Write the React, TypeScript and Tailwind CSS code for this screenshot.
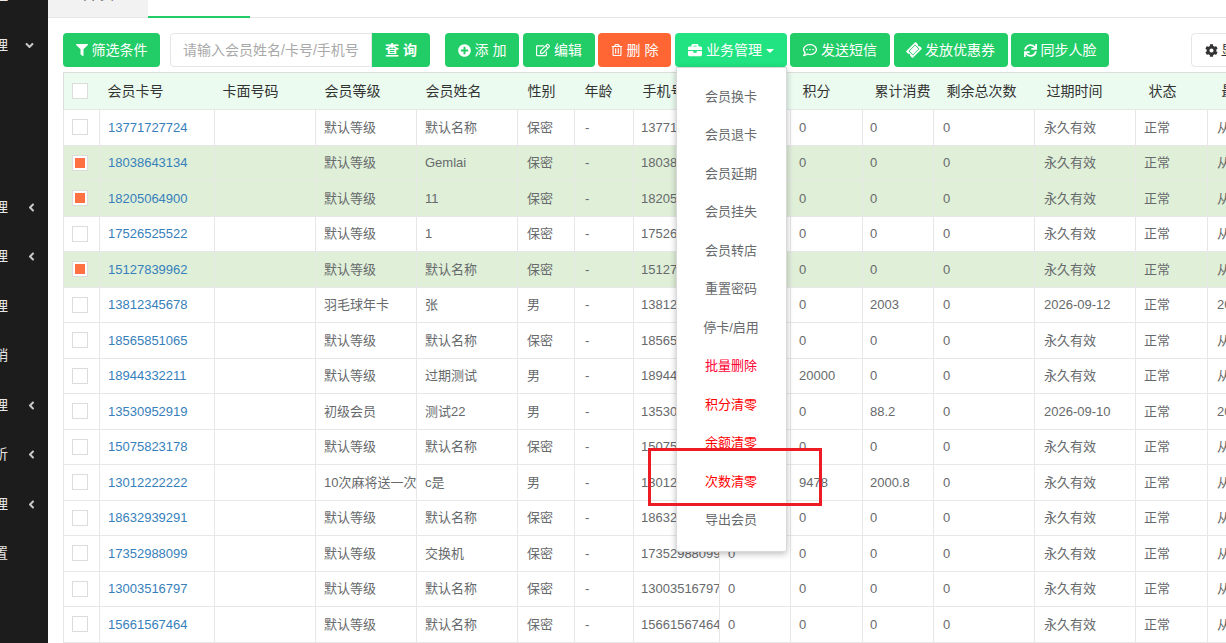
import type { ReactNode } from "react";
import {
  FaAngleDown,
  FaAngleLeft,
  FaBriefcase,
  FaCog,
  FaFilter,
  FaPlusCircle,
  FaRegCommentDots,
  FaRegEdit,
  FaRegTrashAlt,
  FaSync,
  FaTicketAlt,
} from "react-icons/fa";

type Member = {
  card: string;
  level: string;
  name: string;
  sex: string;
  points: string;
  spent: string;
  expire: string;
  last: string;
  checked?: boolean;
};

const FOREVER = "永久有效";
const NEVER = "从未消费";

const members: Member[] = [
  { card: "13771727724", level: "默认等级", name: "默认名称", sex: "保密", points: "0", spent: "0", expire: FOREVER, last: NEVER },
  { card: "18038643134", level: "默认等级", name: "Gemlai", sex: "保密", points: "0", spent: "0", expire: FOREVER, last: NEVER, checked: true },
  { card: "18205064900", level: "默认等级", name: "11", sex: "保密", points: "0", spent: "0", expire: FOREVER, last: NEVER, checked: true },
  { card: "17526525522", level: "默认等级", name: "1", sex: "保密", points: "0", spent: "0", expire: FOREVER, last: NEVER },
  { card: "15127839962", level: "默认等级", name: "默认名称", sex: "保密", points: "0", spent: "0", expire: FOREVER, last: NEVER, checked: true },
  { card: "13812345678", level: "羽毛球年卡", name: "张", sex: "男", points: "0", spent: "2003", expire: "2026-09-12", last: "2025-09-12" },
  { card: "18565851065", level: "默认等级", name: "默认名称", sex: "保密", points: "0", spent: "0", expire: FOREVER, last: NEVER },
  { card: "18944332211", level: "默认等级", name: "过期测试", sex: "男", points: "20000", spent: "0", expire: FOREVER, last: NEVER },
  { card: "13530952919", level: "初级会员", name: "测试22", sex: "男", points: "0", spent: "88.2", expire: "2026-09-10", last: "2025-09-10" },
  { card: "15075823178", level: "默认等级", name: "默认名称", sex: "保密", points: "0", spent: "0", expire: FOREVER, last: NEVER },
  { card: "13012222222", level: "10次麻将送一次", name: "c是", sex: "男", points: "9478", spent: "2000.8", expire: FOREVER, last: NEVER },
  { card: "18632939291", level: "默认等级", name: "默认名称", sex: "保密", points: "0", spent: "0", expire: FOREVER, last: NEVER },
  { card: "17352988099", level: "默认等级", name: "交换机", sex: "保密", points: "0", spent: "0", expire: FOREVER, last: NEVER },
  { card: "13003516797", level: "默认等级", name: "默认名称", sex: "保密", points: "0", spent: "0", expire: FOREVER, last: NEVER },
  { card: "15661567464", level: "默认等级", name: "默认名称", sex: "保密", points: "0", spent: "0", expire: FOREVER, last: NEVER },
];

const columns = [
  { title: "", width: "w-[36px]", pad: "pl-[8px]" },
  { title: "会员卡号", width: "w-[115px]", pad: "pl-[8px]" },
  { title: "卡面号码", width: "w-[101px]", pad: "pl-[8px]" },
  { title: "会员等级", width: "w-[101px]", pad: "pl-[9px]" },
  { title: "会员姓名", width: "w-[101px]", pad: "pl-[9px]" },
  { title: "性别", width: "w-[57px]", pad: "pl-[10px]" },
  { title: "年龄", width: "w-[59px]", pad: "pl-[10px]" },
  { title: "手机号", width: "w-[86px]", pad: "pl-[9px]" },
  { title: "余额", width: "w-[71px]", pad: "pl-[9px]" },
  { title: "积分", width: "w-[72px]", pad: "pl-[12px]" },
  { title: "累计消费", width: "w-[71px]", pad: "pl-[12px]" },
  { title: "剩余总次数", width: "w-[101px]", pad: "pl-[13px]" },
  { title: "过期时间", width: "w-[101px]", pad: "pl-[12px]" },
  { title: "状态", width: "w-[72px]", pad: "pl-[13px]" },
  { title: "最后消费", width: "w-[120px]", pad: "pl-[14px]" },
];

const menuItems = [
  { label: "会员换卡", color: "text-[#676a6c]" },
  { label: "会员退卡", color: "text-[#676a6c]" },
  { label: "会员延期", color: "text-[#676a6c]" },
  { label: "会员挂失", color: "text-[#676a6c]" },
  { label: "会员转店", color: "text-[#676a6c]" },
  { label: "重置密码", color: "text-[#676a6c]" },
  { label: "停卡/启用", color: "text-[#676a6c]" },
  { label: "批量删除", color: "text-[#ff0033]" },
  { label: "积分清零", color: "text-[#ff0000]" },
  { label: "余额清零", color: "text-[#ff0000]" },
  { label: "次数清零", color: "text-[#ff0000]" },
  { label: "导出会员", color: "text-[#676a6c]" },
];

function SideItem({ text, arrow }: { text: string; arrow?: "left" | "down" }) {
  return (
    <div className="flex h-[49.5px] items-center text-[14px] text-[#e6e6e6]">
      <div className="flex w-[8px] shrink-0 justify-end overflow-hidden">
        <span className="shrink-0">{text}</span>
      </div>
      {arrow === "left" && <FaAngleLeft className="ml-[17px] text-[13px] text-[#c9c9c9]" />}
      {arrow === "down" && <FaAngleDown className="ml-[15px] text-[13px] text-[#c9c9c9]" />}
    </div>
  );
}

function Sidebar() {
  return (
    <aside className="h-full w-[48px] shrink-0 overflow-hidden bg-[#1c1c1c]">
      <div className="-mt-[29px]">
        <SideItem text="理" arrow="left" />
        <SideItem text="理" arrow="down" />
        <div className="h-[112.5px]" />
        <SideItem text="理" arrow="left" />
        <SideItem text="理" arrow="left" />
        <SideItem text="理" />
        <SideItem text="销" />
        <SideItem text="理" arrow="left" />
        <SideItem text="析" arrow="left" />
        <SideItem text="理" arrow="left" />
        <SideItem text="置" />
      </div>
    </aside>
  );
}

function Tabs() {
  return (
    <div className="-mt-[29px] flex h-[47px] items-stretch border-b border-[#e7e7e7] text-[14px]">
      <div className="flex w-[100px] items-center justify-center bg-[#f2f2f2] text-[#555]">首 页</div>
      <div className="-mb-px flex w-[102px] items-center justify-center gap-[4px] border-b-2 border-[#22cc66] text-[#22cc66]">
        会员列表
        <span className="text-[#ccc]">×</span>
      </div>
    </div>
  );
}

function ToolButton({ icon, children, className }: { icon: ReactNode; children: ReactNode; className: string }) {
  return (
    <button className={`flex h-[34px] shrink-0 items-center justify-center gap-[4px] rounded-[4px] text-[14px] text-white ${className}`}>
      {icon}
      <span className="whitespace-pre">{children}</span>
    </button>
  );
}

function Toolbar() {
  return (
    <div className="mt-[15px] flex h-[34px] items-start">
      <ToolButton icon={<FaFilter className="text-[12px]" />} className="w-[97px] bg-[#22cc66]">
        筛选条件
      </ToolButton>
      <div className="ml-[10px] flex shrink-0">
        <input
          placeholder="请输入会员姓名/卡号/手机号"
          className="h-[34px] w-[202px] rounded-l-[4px] border border-[#e5e6e7] px-[12px] text-[14px] outline-none placeholder:text-[#a9a9a9]"
        />
        <button className="h-[34px] w-[58px] rounded-r-[4px] bg-[#22cc66] text-[14px] font-bold whitespace-pre text-white">查 询</button>
      </div>
      <ToolButton icon={<FaPlusCircle className="text-[13px]" />} className="ml-[15px] w-[74px] bg-[#22cc66]">
        添 加
      </ToolButton>
      <ToolButton icon={<FaRegEdit className="text-[14px]" />} className="ml-[4px] w-[72px] bg-[#22cc66]">
        编辑
      </ToolButton>
      <ToolButton icon={<FaRegTrashAlt className="text-[12px]" />} className="ml-[3px] w-[73px] bg-[#ff6633]">
        删 除
      </ToolButton>
      <div className="relative ml-[4px] shrink-0">
        <ToolButton icon={<FaBriefcase className="text-[14px]" />} className="w-[112px] bg-[#21e381]">
          业务管理
          <span className="ml-[4px] inline-block h-0 w-0 translate-y-[-2px] border-x-[4px] border-t-[4px] border-x-transparent border-t-white" />
        </ToolButton>
        <div className="absolute top-[34px] left-[1px] z-10 w-[111px] rounded-b-[3px] border border-[#d9d9d9] bg-white pt-[9px] pr-[1px] pb-[12px] text-center text-[13px] shadow-[0_2px_6px_rgba(0,0,0,0.25)]">
          {menuItems.map((item) => (
            <div key={item.label} className={`flex h-[38.5px] items-center justify-center ${item.color}`}>
              {item.label}
            </div>
          ))}
        </div>
      </div>
      <ToolButton icon={<FaRegCommentDots className="text-[14px]" />} className="ml-[3px] w-[100px] bg-[#22cc66]">
        发送短信
      </ToolButton>
      <ToolButton icon={<FaTicketAlt className="-rotate-45 text-[14px]" />} className="ml-[4px] w-[114px] bg-[#22cc66]">
        发放优惠券
      </ToolButton>
      <ToolButton icon={<FaSync className="text-[13px]" />} className="ml-[3px] w-[98px] bg-[#22cc66]">
        同步人脸
      </ToolButton>
      <button className="ml-[82px] flex h-[34px] w-[100px] shrink-0 items-center gap-[3px] rounded-[4px] border border-[#e7e7e7] bg-white pl-[13px] text-[14px] text-[#333]">
        <FaCog className="text-[13px]" />
        显示列
      </button>
    </div>
  );
}

function Checkbox({ checked }: { checked?: boolean }) {
  return (
    <span className="flex h-[16px] w-[16px] items-center justify-center border border-[#dcdcdc] bg-white">
      {checked && <span className="h-[10px] w-[10px] bg-[#ff7043]" />}
    </span>
  );
}

function MemberTable() {
  const cell = "border border-[#e7e7e7] whitespace-nowrap overflow-hidden";
  return (
    <table className="mt-[5px] w-[1264px] table-fixed border-collapse text-left">
      <colgroup>
        {columns.map((c, i) => (
          <col key={i} className={c.width} />
        ))}
      </colgroup>
      <thead>
        <tr className="h-[37px] border-t border-b border-t-[#dddddd] border-b-[#c5e8d3] bg-[#ebfbf0] text-[14px] font-normal text-[#333]">
          {columns.map((c, i) => (
            <th key={i} className={`font-normal whitespace-nowrap ${c.pad} ${i === 0 ? "border-l border-[#dddddd]" : ""}`}>
              {i === 0 ? <Checkbox /> : c.title}
            </th>
          ))}
        </tr>
      </thead>
      <tbody className="text-[13px] text-[#676a6c]">
        {members.map((m) => (
          <tr key={m.card} className={`h-[35.5px] ${m.checked ? "bg-[#dfefd8]" : "bg-white"}`}>
            <td className={`${cell} pl-[8px]`}>
              <Checkbox checked={m.checked} />
            </td>
            <td className={`${cell} pl-[8px] text-[#377fbb]`}>{m.card}</td>
            <td className={cell} />
            <td className={`${cell} pl-[8px]`}>{m.level}</td>
            <td className={`${cell} pl-[8px]`}>{m.name}</td>
            <td className={`${cell} pl-[9px]`}>{m.sex}</td>
            <td className={`${cell} pl-[10px]`}>-</td>
            <td className={`${cell} pl-[7px]`}>{m.card}</td>
            <td className={`${cell} pl-[8px]`}>0</td>
            <td className={`${cell} pl-[8px]`}>{m.points}</td>
            <td className={`${cell} pl-[7px]`}>{m.spent}</td>
            <td className={`${cell} pl-[9px]`}>0</td>
            <td className={`${cell} pl-[9px]`}>{m.expire}</td>
            <td className={`${cell} pl-[8px]`}>正常</td>
            <td className={`${cell} pl-[9px]`}>{m.last}</td>
          </tr>
        ))}
      </tbody>
    </table>
  );
}

export default function App() {
  return (
    <div className="relative flex h-[643px] w-[1226px] overflow-hidden bg-white font-['Liberation_Sans','Noto_Sans_CJK_SC',sans-serif]">
      <Sidebar />
      <main className="min-w-0 flex-1 overflow-hidden">
        <Tabs />
        <div className="pl-[15px]">
          <Toolbar />
          <MemberTable />
        </div>
      </main>
      {/* annotation drawn on top of the screenshot */}
      <div className="absolute top-[448px] left-[648px] z-20 h-[58px] w-[174px] border-[3px] border-[#ed1c24]" />
    </div>
  );
}
